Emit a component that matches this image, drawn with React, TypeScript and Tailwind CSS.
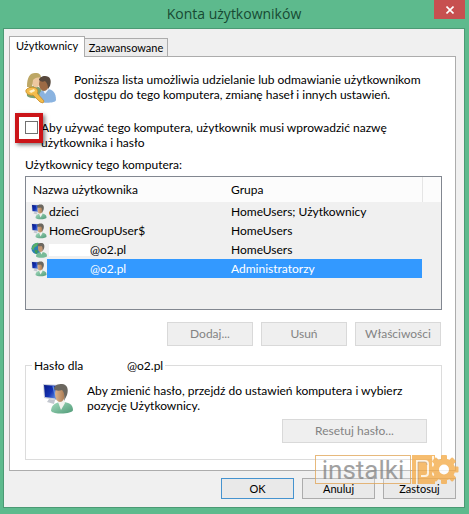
import type { ReactNode } from "react";

function UserFigure({ className }: { className: string }) {
  return (
    <svg viewBox="0 0 32 32" className={className} aria-hidden="true">
      <defs>
        <linearGradient id="screen" x1="0" y1="0" x2="1" y2="0.6">
          <stop offset="0" stopColor="#071a86" />
          <stop offset="0.55" stopColor="#1533b4" />
          <stop offset="1" stopColor="#6c9de8" />
        </linearGradient>
        <linearGradient id="shirt" x1="0" y1="0" x2="1" y2="1">
          <stop offset="0" stopColor="#a5dcbf" />
          <stop offset="1" stopColor="#4f9a77" />
        </linearGradient>
        <linearGradient id="face" x1="0" y1="0" x2="1" y2="0">
          <stop offset="0" stopColor="#dcb48e" />
          <stop offset="1" stopColor="#a87850" />
        </linearGradient>
      </defs>
      <path d="M1 1l18 1v16L2 15z" fill="#c9cfda" />
      <path d="M2 2l16 1v13L3 14z" fill="url(#screen)" />
      <path d="M11 3l3 13" stroke="#5f8fe6" strokeWidth="1.2" />
      <path d="M7 16l6 1-1 4-7-2z" fill="#c3c7cf" />
      <path d="M9 28c0-6 5-9 11-9s11 2 11 8c0 4-19 5-22 1z" fill="url(#shirt)" />
      <path d="M16 19l3 8 4-7-1-3h-5z" fill="#f2f2ee" />
      <ellipse cx="18" cy="11" rx="5" ry="8" fill="url(#face)" />
      <path d="M12 6c0-4 4-5 8-5 5 0 7 5 5 11l-3 6c1-6 0-9-2-11-3 1-6 1-8-1z" fill="#6b675f" />
    </svg>
  );
}

function GlobeUser({ className }: { className: string }) {
  return (
    <svg viewBox="0 0 32 32" className={className} aria-hidden="true">
      <circle cx="12" cy="13" r="11" fill="#2c7fb5" />
      <path d="M3 8c4-6 9-7 12-6l-3 6-5 3-2 5-4-2z" fill="#54b06a" />
      <path d="M8 15l6 2-2 7c-4-1-6-4-4-9z" fill="#3f9b58" />
      <path d="M10 29c0-6 5-9 11-9s11 2 11 8c0 4-19 5-22 1z" fill="#77bb97" />
      <path d="M18 19l3 6 3-6-1-3h-4z" fill="#f2f2ee" />
      <ellipse cx="19" cy="12" rx="5" ry="8" fill="#c39671" />
      <path d="M13 7c0-4 4-5 8-5 5 0 7 5 5 11l-3 6c1-6 0-9-2-11-3 1-6 1-8-1z" fill="#6b675f" />
    </svg>
  );
}

function UsersWithKey() {
  return (
    <svg viewBox="0 0 32 32" className="h-8 w-8 shrink-0" aria-hidden="true">
      <path d="M2 24c-1-7 2-10 7-10s9 3 8 10c-3 3-12 3-15 0z" fill="#7da070" />
      <ellipse cx="11" cy="9" rx="4.5" ry="6.5" fill="#edc8a0" />
      <path d="M2 15C2 5 5 1 10 1s6 2 6 5c-4-1-6 0-8 2l-1 7z" fill="#bda765" />
      <path d="M14 29c-1-8 2-12 8-12s9 4 9 11c0 3-13 4-17 1z" fill="#8ab3e0" />
      <path d="M18 18l2 4 4-5-1-2h-5z" fill="#f0f4fa" />
      <ellipse cx="19" cy="12" rx="5" ry="7" fill="#9c6a45" />
      <path d="M14 8c0-2 3-4 6-4 5 0 7 4 5 10l-2 3c0-4-1-6-3-8-2 1-4 1-6-1z" fill="#57483c" />
      <path d="M1 18c2-3 8-4 11-1 1 2 1 3 0 4l7 8-1 2-3-1-7-7c-4 1-8-2-7-5z" fill="#f4bd4c" stroke="#c98a26" strokeWidth="0.8" />
      <path d="M4 19l5-2 1 2-4 2z" fill="#fff3cc" />
    </svg>
  );
}

function PushButton({ children, className, disabled }: { children: ReactNode; className: string; disabled?: boolean }) {
  return (
    <button type="button" disabled={disabled} className={`shrink-0 border text-center leading-4 ${className}`}>
      {children}
    </button>
  );
}

function Watermark() {
  return (
    <div className="pointer-events-none absolute right-2.5 bottom-[30px] flex opacity-80">
      <div className="flex h-[29px] w-24 items-center justify-center border border-[#e2a85c] bg-white/30 font-['Roboto',sans-serif] text-[26px] leading-7 text-[#8a8a8a]">
        instalki
      </div>
      <svg viewBox="0 0 48 29" className="h-[29px] w-12" aria-hidden="true">
        <rect x="1" width="23" height="29" fill="#f5ad4c" />
        <path d="M6 29V6h8q3 0 3 3v9q0 3-3 3h-4M22 1v17q0 3 3 3" fill="none" stroke="#fff2dd" strokeWidth="2" />
        <path d="M7 29V7h7q2 0 2 3" fill="none" stroke="#9d8464" strokeWidth="0.6" />
        <g fill="#f5ad4c">
          <rect x="30" y="0" width="6" height="29" rx="1" />
          <rect x="30" y="0" width="6" height="29" rx="1" transform="rotate(45 33 14.5)" />
          <rect x="30" y="0" width="6" height="29" rx="1" transform="rotate(90 33 14.5)" />
          <rect x="30" y="0" width="6" height="29" rx="1" transform="rotate(135 33 14.5)" />
          <circle cx="33" cy="14.5" r="11" />
        </g>
        <circle cx="33" cy="14.5" r="5" fill="#fff" />
      </svg>
    </div>
  );
}

const users = [
  { name: "dzieci", group: "HomeUsers; Użytkownicy" },
  { name: "HomeGroupUser$", group: "HomeUsers" },
  { name: "@o2.pl", group: "HomeUsers", globe: true, hidden: true },
  { name: "@o2.pl", group: "Administratorzy", hidden: true, selected: true },
];

export default function App() {
  return (
    <div className="relative bg-[#5dba8d] pr-1 pb-1.5 pl-[3px] font-['Lato','Open_Sans',sans-serif] text-[12px] leading-[15px] text-black">
      <header className="relative flex h-7 items-center justify-center">
        <h1 className="font-['Open_Sans',sans-serif] text-[14px] leading-5 text-[#174a33]">Konta użytkowników</h1>
        <button type="button" aria-label="Zamknij" className="absolute top-0 right-0 flex h-[19px] w-[31px] items-center justify-center bg-[#c75050]">
          <svg viewBox="0 0 8 8" className="h-2 w-2" aria-hidden="true">
            <path d="M0.5 0.5l7 7m0-7l-7 7" stroke="#fff" strokeWidth="1.6" />
          </svg>
        </button>
      </header>

      <main className="border border-[#4b9a74] bg-[#f0f0f0] pt-[7px] pr-2 pb-2 pl-[5px]">
        <div role="tablist" className="flex items-end">
          <button type="button" role="tab" aria-selected="true" className="relative z-10 -mb-px h-[21px] w-[76px] border border-b-0 border-[#acacac] bg-white pb-1 text-[11px]">
            Użytkownicy
          </button>
          <button type="button" role="tab" aria-selected="false" className="h-[18px] w-[83px] border border-b-0 border-l-0 border-[#acacac] bg-[#ececec] text-[11px]">
            Zaawansowane
          </button>
        </div>

        <section className="border border-[#acacac] bg-white pt-[15px] pr-[13px] pb-2.5 pl-[15px]">
          <div className="flex gap-[17px]">
            <UsersWithKey />
            <p className="whitespace-nowrap">
              Poniższa lista umożliwia udzielanie lub odmawianie użytkownikom
              <br />
              dostępu do tego komputera, zmianę haseł i innych ustawień.
            </p>
          </div>

          <div className="relative mt-4 flex">
            <input id="login" type="checkbox" className="mt-px h-[13px] w-[13px] shrink-0 appearance-none border border-[#707070] bg-white" />
            <label htmlFor="login" className="ml-[3px]">
              Aby używać tego komputera, użytkownik musi wprowadzić nazwę
              <br />
              użytkownika i hasło
            </label>
            <div className="pointer-events-none absolute -top-[7px] -left-2.5 h-[30px] w-7 border-4 border-[#cb1418] shadow-[2px_2px_4px_rgba(0,0,0,0.5)]" />
          </div>

          <p className="mt-[7px] mb-1">Użytkownicy tego komputera:</p>
          <div className="h-[134px] border border-[#828790] bg-[#f0f0f0]">
            <table className="w-full table-fixed border-collapse text-left">
              <colgroup>
                <col className="w-[21px]" />
                <col className="w-[177px]" />
                <col />
                <col className="w-[19px]" />
              </colgroup>
              <thead>
                <tr className="h-[25px] bg-[#fcfcfc]">
                  <th colSpan={2} className="p-0 pl-[7px] font-normal">Nazwa użytkownika</th>
                  <th className="border-r border-[#e5e5e5] p-0 pl-[7px] font-normal">Grupa</th>
                  <th className="p-0" />
                </tr>
              </thead>
              <tbody>
                {users.map((user) => (
                  <tr key={user.name + user.group} className="h-[19px]">
                    <td className="p-0 pl-[5px]">
                      {user.globe ? <GlobeUser className="h-4 w-4" /> : <UserFigure className="h-4 w-4" />}
                    </td>
                    <td className={user.selected ? "bg-[#3399ff] p-0 text-white" : "p-0"}>
                      <div className="flex items-center pl-0.5">
                        {user.hidden && <span className={user.selected ? "h-3 w-[41px]" : "h-3 w-[41px] bg-white"} />}
                        {user.name}
                      </div>
                    </td>
                    <td className={user.selected ? "bg-[#3399ff] p-0 pl-[7px] text-white" : "p-0 pl-[7px]"}>{user.group}</td>
                    <td className="p-0" />
                  </tr>
                ))}
              </tbody>
            </table>
          </div>

          <div className="mt-3 flex justify-end gap-2 pr-px">
            <PushButton disabled className="h-6 w-[86px] border-[#d9d9d9] bg-[#efefef] text-[#838383]">Dodaj...</PushButton>
            <PushButton disabled className="h-6 w-[86px] border-[#d9d9d9] bg-[#efefef] text-[#838383]">Usuń</PushButton>
            <PushButton disabled className="h-6 w-[86px] border-[#d9d9d9] bg-[#efefef] text-[#838383]">Właściwości</PushButton>
          </div>

          <fieldset className="mt-3 border border-[#dcdcdc] pr-3.5 pb-4 pl-4">
            <legend className="-ml-2.5 flex px-0.5">
              <span className="w-[93px]">Hasło dla</span>
              <span>@o2.pl</span>
            </legend>
            <div className="mt-2.5 flex gap-[13px]">
              <UserFigure className="h-8 w-8 shrink-0" />
              <p className="whitespace-nowrap">
                Aby zmienić hasło, przejdź do ustawień komputera i wybierz
                <br />
                pozycję Użytkownicy.
              </p>
            </div>
            <div className="mt-1 flex justify-end">
              <PushButton disabled className="h-6 w-[145px] border-[#d9d9d9] bg-[#efefef] text-[#838383]">Resetuj hasło...</PushButton>
            </div>
          </fieldset>
        </section>

        <footer className="mt-[7px] flex justify-end gap-2 text-[11px]">
          <PushButton className="h-[21px] w-[73px] border-[#4593cf] bg-[#e9e9e9]">OK</PushButton>
          <PushButton className="h-[21px] w-[73px] border-[#acacac] bg-[#e9e9e9]">Anuluj</PushButton>
          <PushButton className="h-[21px] w-[73px] border-[#acacac] bg-[#e9e9e9]">Zastosuj</PushButton>
        </footer>
      </main>
      <Watermark />
    </div>
  );
}
